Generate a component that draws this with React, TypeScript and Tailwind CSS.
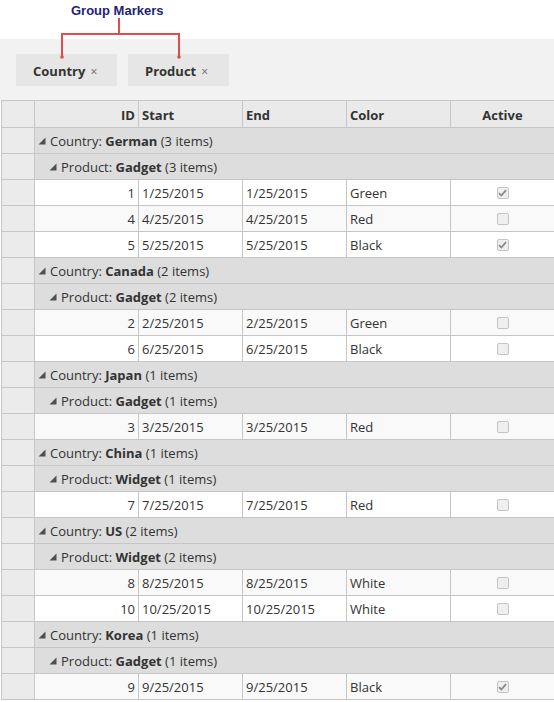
import React from 'react';

type Item = { id: number; start: string; color: string; active: boolean };

type Group = {
  country: string;
  product: string;
  items: Item[];
};

const groups: Group[] = [
  {
    country: 'German',
    product: 'Gadget',
    items: [
      { id: 1, start: '1/25/2015', color: 'Green', active: true },
      { id: 4, start: '4/25/2015', color: 'Red', active: false },
      { id: 5, start: '5/25/2015', color: 'Black', active: true },
    ],
  },
  {
    country: 'Canada',
    product: 'Gadget',
    items: [
      { id: 2, start: '2/25/2015', color: 'Green', active: false },
      { id: 6, start: '6/25/2015', color: 'Black', active: false },
    ],
  },
  {
    country: 'Japan',
    product: 'Gadget',
    items: [{ id: 3, start: '3/25/2015', color: 'Red', active: false }],
  },
  {
    country: 'China',
    product: 'Widget',
    items: [{ id: 7, start: '7/25/2015', color: 'Red', active: false }],
  },
  {
    country: 'US',
    product: 'Widget',
    items: [
      { id: 8, start: '8/25/2015', color: 'White', active: false },
      { id: 10, start: '10/25/2015', color: 'White', active: false },
    ],
  },
  {
    country: 'Korea',
    product: 'Gadget',
    items: [{ id: 9, start: '9/25/2015', color: 'Black', active: true }],
  },
];

const Caret = () => (
  <svg width="8" height="8" viewBox="0 0 8 8" className="mr-[4px] shrink-0 -mt-px">
    <polygon points="7.5,0.5 7.5,7.5 0.5,7.5" fill="#505050" />
  </svg>
);

const CheckBox = ({ checked }: { checked: boolean }) => (
  <div className="w-[12px] h-[12px] -mt-px rounded-[2px] border border-[#c4c4c4] bg-[#efefef] flex items-center justify-center">
    {checked && (
      <svg width="9" height="8" viewBox="0 0 9 8">
        <path d="M1 4.2 L3.4 6.5 L8 1.2" stroke="#8a8a8a" strokeWidth="1.8" fill="none" />
      </svg>
    )}
  </div>
);

const Chip = ({ label }: { label: string }) => (
  <div className="w-[101px] h-[32px] bg-[#e6e6e6] flex items-center pl-[17px] pt-[3px]">
    <span className="text-[13px] font-bold text-[#333]">{label}</span>
    <span className="ml-[5px] text-[12px] text-[#666]">×</span>
  </div>
);

// data / group cells share this
const cell = 'h-[26px] border-r border-b border-[#c6c6c6] flex items-center pt-[2px]';
const head = 'h-[27px] bg-[#eaeaea] border-r border-b border-[#c6c6c6] font-bold flex items-center pt-[3px]';

export default function App() {
  let rowIndex = 0;

  return (
    <div className="relative w-[554px] h-[702px] overflow-hidden bg-white font-['Open_Sans',sans-serif] text-[13px] text-[#333]">
      {/* annotation */}
      <div className="h-[39px] pl-[71px] pt-[1px]">
        <span className="font-['Liberation_Sans',sans-serif] font-bold text-[13px] leading-[15px] text-[#1f1f78]">
          Group Markers
        </span>
      </div>
      <svg className="absolute left-0 top-0 pointer-events-none" width="554" height="70">
        <g stroke="#e24b4b" strokeWidth="2" fill="none">
          <line x1="119" y1="18" x2="119" y2="34" />
          <line x1="62" y1="34" x2="180" y2="34" />
          <line x1="62" y1="33" x2="62" y2="57" />
          <line x1="179" y1="33" x2="179" y2="57" />
        </g>
        <circle cx="62" cy="57" r="1.8" fill="#e24b4b" />
        <circle cx="179" cy="57" r="1.8" fill="#e24b4b" />
      </svg>

      {/* group panel */}
      <div className="h-[61px] bg-[#f2f2f2] flex gap-[11px] pl-4 pt-[15px]">
        <Chip label="Country" />
        <Chip label="Product" />
      </div>

      {/* grid */}
      <div className="ml-px w-[554px] grid grid-cols-[33px_104px_104px_104px_104px_104px] border-l border-t border-[#c6c6c6]">
        <div className="h-[27px] bg-[#ebebeb] border-r border-b border-[#c6c6c6]" />
        <div className={`${head} justify-end pr-[3px]`}>ID</div>
        <div className={`${head} pl-[3px]`}>Start</div>
        <div className={`${head} pl-[3px]`}>End</div>
        <div className={`${head} pl-[3px]`}>Color</div>
        <div className={`${head} justify-center`}>Active</div>

        {groups.map((g) => (
          <React.Fragment key={g.country}>
            <div className={`${cell} bg-[#ebebeb]`} />
            <div className={`${cell} col-span-5 bg-[#dddddd] pl-[3px]`}>
              <Caret />
              <span>
                Country: <b>{g.country}</b> ({g.items.length} items)
              </span>
            </div>
            <div className={`${cell} bg-[#ebebeb]`} />
            <div className={`${cell} col-span-5 bg-[#dddddd] pl-[14px]`}>
              <Caret />
              <span>
                Product: <b>{g.product}</b> ({g.items.length} items)
              </span>
            </div>
            {g.items.map((it) => {
              const bg = rowIndex++ % 2 === 0 ? 'bg-white' : 'bg-[#f9f9f9]';
              return (
                <React.Fragment key={it.id}>
                  <div className={`${cell} bg-[#ebebeb]`} />
                  <div className={`${cell} ${bg} justify-end pr-[3px]`}>{it.id}</div>
                  <div className={`${cell} ${bg} pl-[3px]`}>{it.start}</div>
                  <div className={`${cell} ${bg} pl-[3px]`}>{it.start}</div>
                  <div className={`${cell} ${bg} pl-[3px]`}>{it.color}</div>
                  <div className={`${cell} ${bg} justify-center`}>
                    <CheckBox checked={it.active} />
                  </div>
                </React.Fragment>
              );
            })}
          </React.Fragment>
        ))}
      </div>
    </div>
  );
}
